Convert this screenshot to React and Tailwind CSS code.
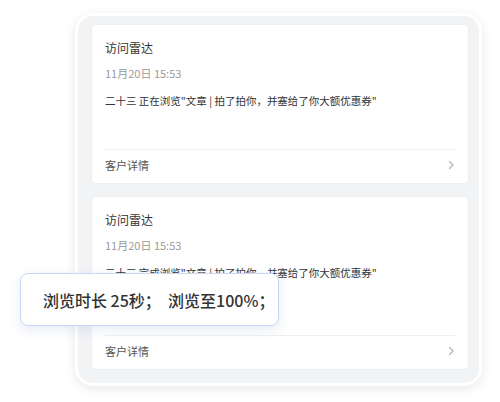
const CARDS = [
  { action: '正在浏览', spacer: 'h-[40px]' },
  { action: '完成浏览', spacer: 'h-[54px]' },
];

function Chevron() {
  return (
    <svg className="w-[8px] h-[10px] text-[#b5b5b5]" viewBox="0 0 8 10" fill="none" stroke="currentColor">
      <path d="M2.5 1.5 6 5 2.5 8.5" strokeWidth={1.3} strokeLinecap="round" strokeLinejoin="round" />
    </svg>
  );
}

function RadarCard({ action, spacer }) {
  return (
    <div className="bg-white rounded-[4px] px-[13px] pt-[15px] shadow-[0_0_2px_rgba(0,0,0,0.06)]">
      <div className="text-[12px] leading-[16px] text-[#333]">访问雷达</div>
      <div className="mt-[9px] text-[11px] leading-[16px] text-[#9a9a9a]">11月20日 15:53</div>
      <div className="mt-[12px] text-[10.5px] leading-[16px] text-[#333] whitespace-nowrap">
        二十三 {action}"文章 | 拍了拍你，并塞给了你大额优惠券"
      </div>
      <div className={spacer}></div>
      <div className="border-t border-[#f0f0f0] pt-[7px] pb-[10px] flex items-center justify-between">
        <span className="text-[11px] leading-[16px] text-[#555]">客户详情</span>
        <Chevron />
      </div>
    </div>
  );
}

export default function App() {
  return (
    <div className="relative w-[500px] h-[402px] bg-white overflow-hidden font-['Noto_Sans_CJK_SC','Noto_Sans',sans-serif]">
      <div className="pt-[13px] pl-[75px]">
        <div className="w-[407px] rounded-[18px] border-[3px] border-white bg-[#f2f3f5] shadow-[0_3px_12px_rgba(0,0,0,0.09)] pt-[9px] pb-[14px] pl-[14px] pr-[11px] flex flex-col gap-[14px]">
          {CARDS.map((c) => (
            <RadarCard key={c.action} {...c} />
          ))}
        </div>
      </div>

      {/* floating stat bubble */}
      <div className="absolute left-[20px] top-[273px] w-[259px] h-[53px] rounded-[8px] border-[1.5px] border-[#c8d7f5] bg-white shadow-[0_4px_12px_rgba(90,120,180,0.15)] flex items-center pl-[22px]">
        <span className="text-[16px] font-medium text-[#333] whitespace-nowrap">浏览时长 25秒；&nbsp;&nbsp;浏览至100%；</span>
      </div>
    </div>
  );
}
